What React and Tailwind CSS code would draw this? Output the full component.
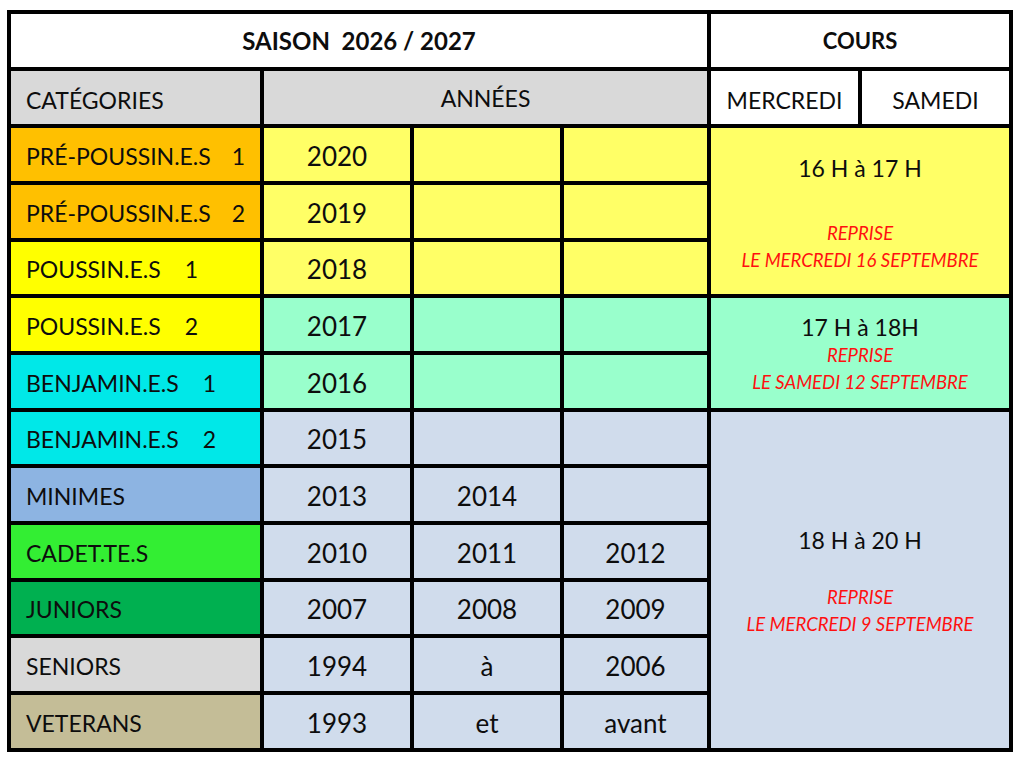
import React from "react";

const rows = [
  { label: "PRÉ-POUSSIN.E.S", num: "1", gap: "ml-[21px]", cat: "bg-[#FFC000]", yr: "bg-[#FFFF66]", y: ["2020", "", ""] },
  { label: "PRÉ-POUSSIN.E.S", num: "2", gap: "ml-[21px]", cat: "bg-[#FFC000]", yr: "bg-[#FFFF66]", y: ["2019", "", ""] },
  { label: "POUSSIN.E.S", num: "1", gap: "ml-[24px]", cat: "bg-[#FFFF00]", yr: "bg-[#FFFF66]", y: ["2018", "", ""] },
  { label: "POUSSIN.E.S", num: "2", gap: "ml-[24px]", cat: "bg-[#FFFF00]", yr: "bg-[#99FFCC]", y: ["2017", "", ""] },
  { label: "BENJAMIN.E.S", num: "1", gap: "ml-[24px]", cat: "bg-[#00E8E8]", yr: "bg-[#99FFCC]", y: ["2016", "", ""] },
  { label: "BENJAMIN.E.S", num: "2", gap: "ml-[24px]", cat: "bg-[#00E8E8]", yr: "bg-[#D0DCEC]", y: ["2015", "", ""] },
  { label: "MINIMES", num: "", gap: "", cat: "bg-[#8DB4E2]", yr: "bg-[#D0DCEC]", y: ["2013", "2014", ""] },
  { label: "CADET.TE.S", num: "", gap: "", cat: "bg-[#33EE33]", yr: "bg-[#D0DCEC]", y: ["2010", "2011", "2012"] },
  { label: "JUNIORS", num: "", gap: "", cat: "bg-[#00B050]", yr: "bg-[#D0DCEC]", y: ["2007", "2008", "2009"] },
  { label: "SENIORS", num: "", gap: "", cat: "bg-[#D9D9D9]", yr: "bg-[#D0DCEC]", y: ["1994", "à", "2006"] },
  { label: "VETERANS", num: "", gap: "", cat: "bg-[#C4BD97]", yr: "bg-[#D0DCEC]", y: ["1993", "et", "avant"] },
];

const rowStarts = ["row-start-3", "row-start-4", "row-start-5", "row-start-6", "row-start-7", "row-start-8", "row-start-9", "row-start-10", "row-start-11", "row-start-12", "row-start-13"];

function Red({ children }) {
  return <div className="text-[#FF1010] italic text-[18.5px] leading-[27px]">{children}</div>;
}

export default function App() {
  return (
    <div className="min-h-[768px] w-[1024px] bg-white pt-[10px] pl-[7px]" style={{ fontFamily: "Lato, 'Open Sans', sans-serif" }}>
      <div className="grid w-[1006px] bg-black p-[4px] gap-[4px] text-[#0d0d0d] grid-cols-[249px_146px_146px_143px_147px_147px] grid-rows-[53px_53px_53px_53px_52px_53px_53px_52px_53px_53px_52px_53px_53px]">
        <div className="col-span-4 row-start-1 col-start-1 bg-white flex items-center justify-center font-bold text-[24px] whitespace-pre">SAISON  2026 / 2027</div>
        <div className="col-span-2 row-start-1 col-start-5 bg-white flex items-center justify-center font-bold text-[22px]">COURS</div>

        <div className="row-start-2 col-start-1 bg-[#D9D9D9] flex items-center pl-[15px] text-[23px] pt-[5px]">CATÉGORIES</div>
        <div className="row-start-2 col-start-2 col-span-3 bg-[#D9D9D9] flex items-center justify-center text-[23px] pt-[2px]">ANNÉES</div>
        <div className="row-start-2 col-start-5 bg-white flex items-center justify-center text-[23px] pt-[5px]">MERCREDI</div>
        <div className="row-start-2 col-start-6 bg-white flex items-center justify-center text-[23px] pt-[5px]">SAMEDI</div>

        {rows.map((r, i) => (
          <React.Fragment key={i}>
            <div className={`${rowStarts[i]} col-start-1 ${r.cat} flex items-center pl-[15px] text-[23px] pt-[3px]`}>
              <span>{r.label}</span>
              {r.num && <span className={r.gap}>{r.num}</span>}
            </div>
            {r.y.map((v, j) => (
              <div
                key={j}
                className={`${rowStarts[i]} ${j === 0 ? "col-start-2" : j === 1 ? "col-start-3" : "col-start-4"} ${r.yr} flex items-center justify-center text-[26px] pt-[3px]`}
              >
                {v}
              </div>
            ))}
          </React.Fragment>
        ))}

        <div className="row-start-3 row-span-3 col-start-5 col-span-2 bg-[#FFFF66] flex flex-col items-center justify-center text-center pt-[4px]">
          <div className="text-[23px] leading-[30px]">16 H à 17 H</div>
          <div className="h-[37px]"></div>
          <Red>REPRISE</Red>
          <Red>LE MERCREDI 16 SEPTEMBRE</Red>
        </div>
        <div className="row-start-6 row-span-2 col-start-5 col-span-2 bg-[#99FFCC] flex flex-col items-center justify-center text-center pt-[2px]">
          <div className="text-[23px] leading-[30px]">17 H à 18H</div>
          <Red>REPRISE</Red>
          <Red>LE SAMEDI 12 SEPTEMBRE</Red>
        </div>
        <div className="row-start-8 row-span-6 col-start-5 col-span-2 bg-[#D0DCEC] flex flex-col items-center justify-center text-center pt-[2px]">
          <div className="text-[23px] leading-[30px]">18 H à 20 H</div>
          <div className="h-[29px]"></div>
          <Red>REPRISE</Red>
          <Red>LE MERCREDI 9 SEPTEMBRE</Red>
        </div>
      </div>
    </div>
  );
}
